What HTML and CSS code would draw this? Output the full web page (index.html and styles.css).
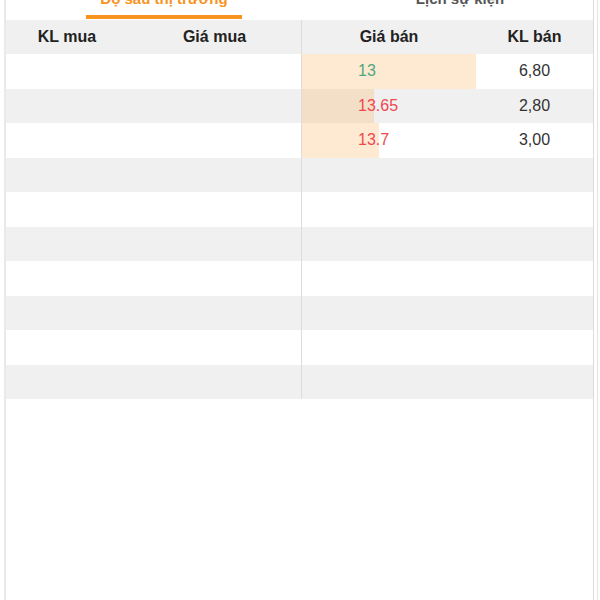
FILE: index.html
```html
<!DOCTYPE html>
<html lang="vi">
<head>
    <meta charset="UTF-8">
    <meta name="viewport" content="width=device-width, initial-scale=1.0">
    <title>Độ sâu thị trường</title>
    <link rel="stylesheet" href="styles.css">
</head>
<body>

<div class="board">
    <div class="tabs">
        <div class="tab active"><span>Độ sâu thị trường</span></div>
        <div class="tab"><span>Lịch sự kiện</span></div>
    </div>

    <div class="book">
        <!-- Buy side -->
        <div class="side buy">
            <div class="row head">
                <div class="cell vol">KL mua</div>
                <div class="cell price">Giá mua</div>
            </div>
            <div class="row"><div class="cell vol"></div><div class="cell price"></div></div>
            <div class="row"><div class="cell vol"></div><div class="cell price"></div></div>
            <div class="row"><div class="cell vol"></div><div class="cell price"></div></div>
            <div class="row"><div class="cell vol"></div><div class="cell price"></div></div>
            <div class="row"><div class="cell vol"></div><div class="cell price"></div></div>
            <div class="row"><div class="cell vol"></div><div class="cell price"></div></div>
            <div class="row"><div class="cell vol"></div><div class="cell price"></div></div>
            <div class="row"><div class="cell vol"></div><div class="cell price"></div></div>
            <div class="row"><div class="cell vol"></div><div class="cell price"></div></div>
            <div class="row"><div class="cell vol"></div><div class="cell price"></div></div>
        </div>

        <!-- Sell side -->
        <div class="side sell">
            <div class="row head">
                <div class="cell price">Giá bán</div>
                <div class="cell vol">KL bán</div>
            </div>
            <div class="row">
                <div class="cell price"><div class="bar" style="width: 100%"></div><span class="ref">13</span></div>
                <div class="cell vol">6,80</div>
            </div>
            <div class="row">
                <div class="cell price"><div class="bar" style="width: 41.2%"></div><span class="up">13.65</span></div>
                <div class="cell vol">2,80</div>
            </div>
            <div class="row">
                <div class="cell price"><div class="bar" style="width: 44.1%"></div><span class="up">13.7</span></div>
                <div class="cell vol">3,00</div>
            </div>
            <div class="row"><div class="cell price"></div><div class="cell vol"></div></div>
            <div class="row"><div class="cell price"></div><div class="cell vol"></div></div>
            <div class="row"><div class="cell price"></div><div class="cell vol"></div></div>
            <div class="row"><div class="cell price"></div><div class="cell vol"></div></div>
            <div class="row"><div class="cell price"></div><div class="cell vol"></div></div>
            <div class="row"><div class="cell price"></div><div class="cell vol"></div></div>
            <div class="row"><div class="cell price"></div><div class="cell vol"></div></div>
        </div>
    </div>
</div>

</body>
</html>
```

FILE: styles.css
```css
body {
    margin: 0;
    padding: 0;
    background-color: #fff;
    font-family: "Liberation Sans", Arial, sans-serif;
    color: #333;
    overflow: hidden;
}
.board {
    margin: 0 6px 0 4px;
    min-height: calc(100vh + 10px); /* tabs pull the board up by 10px */
    border-left: 2px solid #e6e9ed;
    border-right: 1px solid #dcdcdc;
    box-shadow: 3px 0 0 #fff, 4px 0 0 #e4e4e4;
}

.tabs {
    display: flex;
    margin-top: -10px;
    margin-bottom: 1px;
    padding-left: 10px;
}
.tab {
    width: 296px;
    flex-shrink: 0;
    text-align: center;
    font-size: 15px;
    font-weight: bold;
    line-height: 18px;
    color: #555;
}
.tab span {
    display: inline-block;
    padding-bottom: 7px;
    border-bottom: 4px solid transparent;
}
.tab.active span {
    color: #f7931e;
    width: 156px;
    border-bottom-color: #f7931e;
}

/* Order book */
.book {
    display: flex;
}
.side {
    display: flex;
    flex-direction: column;
}
.buy {
    width: 295px;
    border-right: 1px solid #dcdcdc;
}
.sell {
    flex: 1;
}
.row {
    display: flex;
    height: 34.5px;
    font-size: 16px;
}
.row:nth-child(odd) {
    background-color: #f0f0f0;
}
.row.head {
    height: 34px;
    font-weight: bold;
    color: #222;
}
.cell {
    position: relative;
    display: flex;
    align-items: center;
    justify-content: center;
}
.buy .vol {
    width: 122px;
}
.buy .price {
    flex: 1;
}
.sell .price {
    width: 174px;
}
.sell .vol {
    flex: 1;
}
.sell .row:not(.head) .price {
    justify-content: flex-start;
    padding-left: 56px;
    box-sizing: border-box;
}
.bar {
    position: absolute;
    left: 0;
    top: 0;
    bottom: 0;
    background-color: rgba(250, 170, 80, 0.25);
}
.cell span {
    position: relative;
}
.ref {
    color: #4ea87e;
}
.up {
    color: #f0474e;
}
```
